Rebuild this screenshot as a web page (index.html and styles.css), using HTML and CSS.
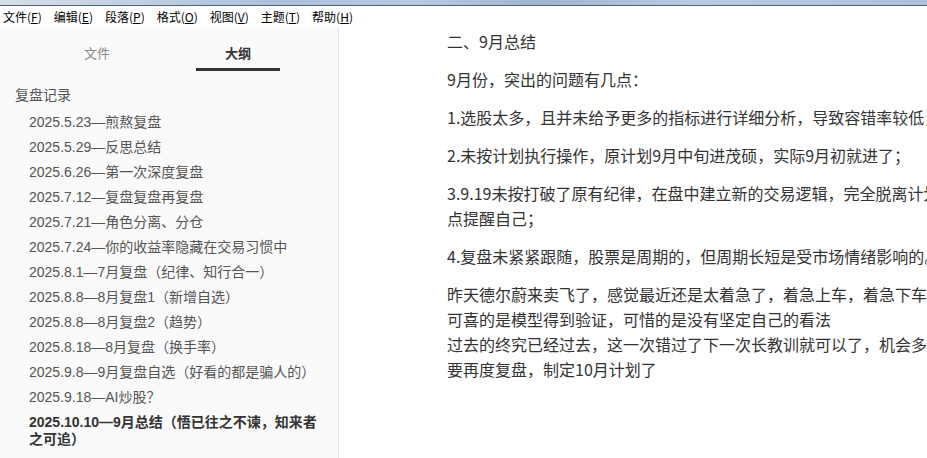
FILE: index.html
```html
<!DOCTYPE html>
<html lang="zh-CN">
<head>
<meta charset="utf-8">
<title>Typora</title>
<link rel="stylesheet" href="styles.css">
</head>
<body>
<div class="titlebar"></div>
<nav class="menubar">
  <span class="menu-item">文件(<u>F</u>)</span>
  <span class="menu-item">编辑(<u>E</u>)</span>
  <span class="menu-item">段落(<u>P</u>)</span>
  <span class="menu-item">格式(<u>O</u>)</span>
  <span class="menu-item">视图(<u>V</u>)</span>
  <span class="menu-item">主题(<u>T</u>)</span>
  <span class="menu-item">帮助(<u>H</u>)</span>
</nav>
<div class="app">
  <aside class="sidebar">
    <div class="tabs">
      <span class="tab">文件</span>
      <span class="tab tab-active">大纲</span>
    </div>
    <ul class="outline">
      <li class="outline-h1">复盘记录</li>
      <li class="outline-h2">2025.5.23—煎熬复盘</li>
      <li class="outline-h2">2025.5.29—反思总结</li>
      <li class="outline-h2">2025.6.26—第一次深度复盘</li>
      <li class="outline-h2">2025.7.12—复盘复盘再复盘</li>
      <li class="outline-h2">2025.7.21—角色分离、分仓</li>
      <li class="outline-h2">2025.7.24—你的收益率隐藏在交易习惯中</li>
      <li class="outline-h2">2025.8.1—7月复盘（纪律、知行合一）</li>
      <li class="outline-h2">2025.8.8—8月复盘1（新增自选）</li>
      <li class="outline-h2">2025.8.8—8月复盘2（趋势）</li>
      <li class="outline-h2">2025.8.18—8月复盘（换手率）</li>
      <li class="outline-h2">2025.9.8—9月复盘自选（好看的都是骗人的）</li>
      <li class="outline-h2">2025.9.18—AI炒股？</li>
      <li class="outline-h2 outline-active">2025.10.10—9月总结（悟已往之不谏，知来者<br>之可追）</li>
    </ul>
  </aside>
  <main class="editor">
    <p>二、9月总结</p>
    <p>9月份，突出的问题有几点：</p>
    <p>1.选股太多，且并未给予更多的指标进行详细分析，导致容错率较低，</p>
    <p>2.未按计划执行操作，原计划9月中旬进茂硕，实际9月初就进了；</p>
    <p>3.9.19未按打破了原有纪律，在盘中建立新的交易逻辑，完全脱离计划，后续需要重<br>点提醒自己；</p>
    <p>4.复盘未紧紧跟随，股票是周期的，但周期长短是受市场情绪影响的。</p>
    <p>昨天德尔蔚来卖飞了，感觉最近还是太着急了，着急上车，着急下车。<br>可喜的是模型得到验证，可惜的是没有坚定自己的看法<br>过去的终究已经过去，这一次错过了下一次长教训就可以了，机会多的是<br>要再度复盘，制定10月计划了</p>
  </main>
</div>
</body>
</html>
```

FILE: styles.css
```css
html, body {
  margin: 0;
  padding: 0;
  height: 458px;
  overflow: hidden;
  background: #ffffff;
  font-family: "Noto Sans CJK SC", "Noto Sans", sans-serif;
}

.titlebar {
  height: 5px;
  border-bottom: 1px solid #566070;
  background: linear-gradient(90deg, #d7dee6 0%, #c3d3e4 12%, #a9c2dc 30%, #b3cbe3 45%, #9fb6cf 58%, #b4cce4 75%, #aac3dc 100%);
}

.menubar {
  display: flex;
  align-items: center;
  height: 21px;
  padding-left: 3px;
  gap: 12px;
  font-size: 12px;
  line-height: 21px;
  color: #000;
  background: #fff;
}

.menu-item {
  white-space: nowrap;
}

.menu-item u {
  text-decoration: underline;
  text-underline-offset: 1px;
}

.app {
  display: flex;
  height: 431px;
}

.sidebar {
  flex: 0 0 338px;
  width: 338px;
  background: #fafafa;
  border-right: 1px solid #e4e4e4;
  overflow: hidden;
}

.tabs {
  display: flex;
  gap: 57px;
  padding-left: 55px;
  margin-top: 16px;
}

.tab {
  width: 84px;
  text-align: center;
  font-size: 13px;
  line-height: 20px;
  padding-bottom: 5px;
  border-bottom: 3px solid transparent;
  color: #8a8a8a;
}

.tab-active {
  color: #333;
  font-weight: bold;
  border-bottom-color: #333;
}

.outline {
  list-style: none;
  margin: 12px 0 0 0;
  padding: 0;
  font-family: "Liberation Sans", "Noto Sans CJK SC", sans-serif;
  font-size: 14px;
  color: #555;
}

.outline li {
  line-height: 17px;
  padding: 4px 0;
  white-space: nowrap;
}

.outline-h1 {
  padding-left: 15px !important;
  margin-bottom: 2px;
}

.outline-h2 {
  padding-left: 29px !important;
}

.outline-active {
  font-weight: bold;
  color: #333;
}

.editor {
  flex: 1;
  overflow: hidden;
  padding: 2px 0 0 108px;
  font-size: 16px;
  line-height: 25px;
  color: #333;
}

.editor p {
  margin: 0 0 13px 0;
  white-space: nowrap;
}
```
